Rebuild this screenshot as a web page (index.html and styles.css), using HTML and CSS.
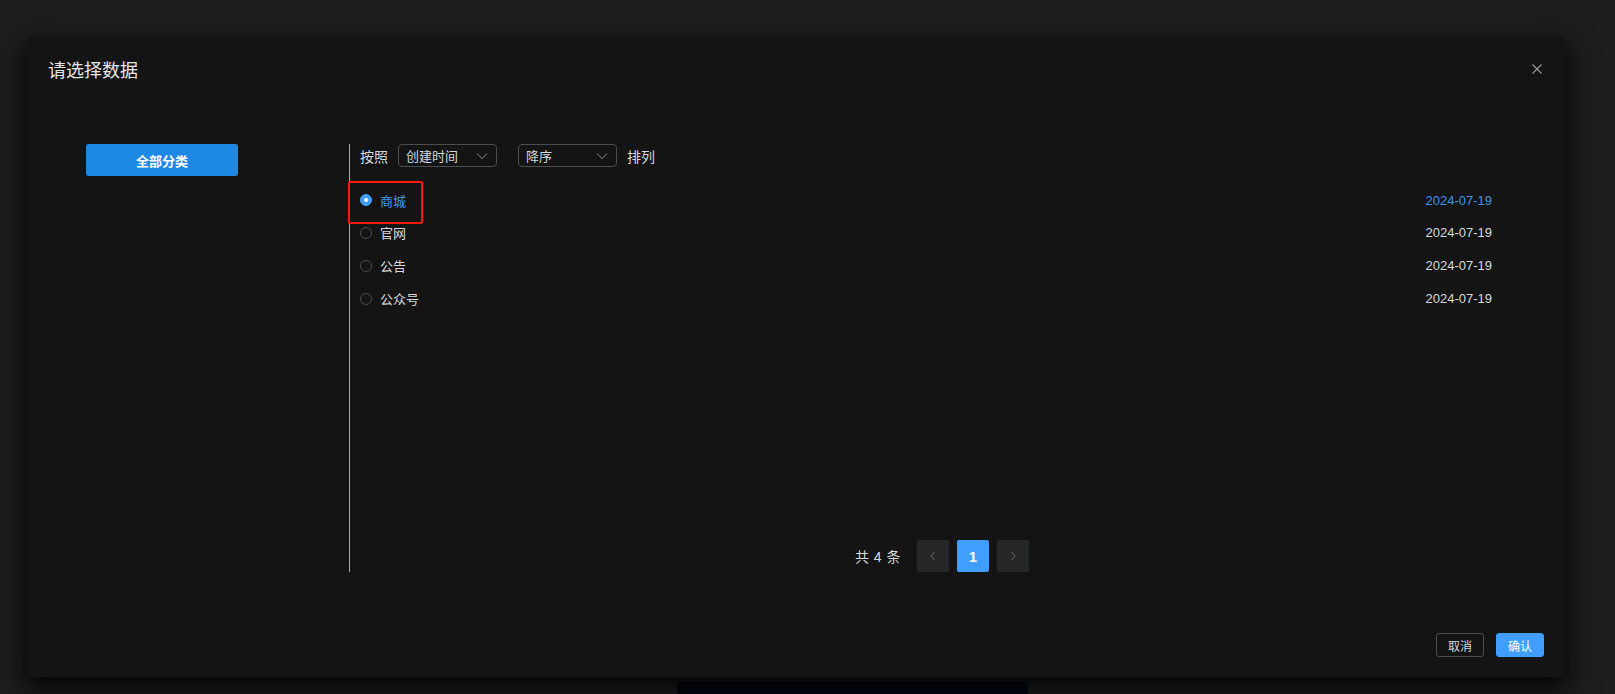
FILE: index.html
```html
<!DOCTYPE html>
<html lang="zh-CN">
<head>
<meta charset="utf-8">
<title>请选择数据</title>
<link rel="stylesheet" href="styles.css">
</head>
<body>
<div class="dialog">
  <div class="dialog-header">
    <span class="dialog-title">请选择数据</span>
    <button class="close-btn" aria-label="关闭">
      <svg width="10" height="10" viewBox="0 0 10 10"><path d="M0.5 0.5L9.5 9.5M9.5 0.5L0.5 9.5" stroke="#9a9a9a" stroke-width="1.1" fill="none"/></svg>
    </button>
  </div>
  <div class="dialog-body">
    <div class="side">
      <button class="cat-btn">全部分类</button>
    </div>
    <div class="panel">
      <div class="toolbar">
        <span class="tb-label">按照</span>
        <div class="select">
          <span>创建时间</span>
          <svg width="12" height="8" viewBox="0 0 12 8"><path d="M1 1.5L6 6.5L11 1.5" stroke="#8d9095" stroke-width="1" fill="none"/></svg>
        </div>
        <div class="select select-2">
          <span>降序</span>
          <svg width="12" height="8" viewBox="0 0 12 8"><path d="M1 1.5L6 6.5L11 1.5" stroke="#8d9095" stroke-width="1" fill="none"/></svg>
        </div>
        <span class="tb-label">排列</span>
      </div>
      <div class="list">
        <div class="row active">
          <label class="radio marked"><span class="dot"></span><span class="name">商城</span></label>
          <span class="date">2024-07-19</span>
        </div>
        <div class="row">
          <label class="radio"><span class="dot"></span><span class="name">官网</span></label>
          <span class="date">2024-07-19</span>
        </div>
        <div class="row">
          <label class="radio"><span class="dot"></span><span class="name">公告</span></label>
          <span class="date">2024-07-19</span>
        </div>
        <div class="row">
          <label class="radio"><span class="dot"></span><span class="name">公众号</span></label>
          <span class="date">2024-07-19</span>
        </div>
      </div>
      <div class="pager">
        <span class="total">共 4 条</span>
        <button class="pg-btn">
          <svg width="8" height="10" viewBox="0 0 8 10"><path d="M5.5 1L2 5L5.5 9" stroke="#6b6d71" stroke-width="1" fill="none"/></svg>
        </button>
        <button class="pg-btn current">1</button>
        <button class="pg-btn">
          <svg width="8" height="10" viewBox="0 0 8 10"><path d="M2.5 1L6 5L2.5 9" stroke="#6b6d71" stroke-width="1" fill="none"/></svg>
        </button>
      </div>
    </div>
  </div>
  <div class="dialog-footer">
    <button class="btn btn-cancel">取消</button>
    <button class="btn btn-ok">确认</button>
  </div>
</div>
<div class="under"></div>
</body>
</html>
```

FILE: styles.css
```css
* { box-sizing: border-box; }
html, body { margin: 0; padding: 0; }
body {
  background: #1e1e1e;
  width: 1615px;
  height: 694px;
  overflow: hidden;
  font-family: "Liberation Sans", "Noto Sans CJK SC", sans-serif;
  color: #d6d9de;
  padding-top: 37px;
  padding-left: 28px;
}
button { font-family: inherit; cursor: pointer; }

.dialog {
  position: relative;
  z-index: 2;
  width: 1536px;
  height: 640px;
  background: #141414;
  display: flex;
  flex-direction: column;
  box-shadow: 0 12px 32px 4px rgba(0,0,0,0.4), 0 8px 20px rgba(0,0,0,0.75);
}

.dialog-header {
  display: flex;
  justify-content: space-between;
  align-items: center;
  padding: 22px 22px 0 20px;
  height: 46px;
}
.dialog-title {
  font-size: 18px;
  line-height: 24px;
  color: #e5e5e5;
}
.close-btn {
  background: none;
  border: none;
  padding: 0;
  width: 10px;
  height: 10px;
  display: flex;
  margin-top: -4px;
}

.dialog-body {
  display: flex;
  margin-top: 61px;
  height: 428px;
}
.side {
  width: 321px;
  padding-left: 58px;
}
.cat-btn {
  width: 152px;
  height: 32px;
  border: none;
  border-radius: 3px;
  background: #1e88e5;
  color: #ffffff;
  font-size: 13px;
  font-weight: bold;
}

.panel {
  flex: 1;
  border-left: 1px solid #a8abb2;
  padding-left: 10px;
  display: flex;
  flex-direction: column;
}
.toolbar {
  display: flex;
  align-items: center;
  height: 23px;
}
.tb-label {
  font-size: 14px;
  color: #d6d9de;
}
.select {
  width: 99px;
  height: 23px;
  border: 1px solid #4c4d4f;
  border-radius: 4px;
  display: flex;
  align-items: center;
  justify-content: space-between;
  padding: 0 8px 0 7px;
  font-size: 13px;
  color: #d6d9de;
  margin-left: 10px;
}
.select-2 { margin-left: 21px; margin-right: 10px; }

.list {
  margin-top: 17px;
  padding-right: 72px;
}
.row {
  height: 33px;
  display: flex;
  align-items: center;
  justify-content: space-between;
}
.row:first-child { height: 32px; }
.radio {
  position: relative;
  display: flex;
  align-items: center;
  gap: 8px;
  font-size: 13px;
  color: #d6d9de;
}
.dot {
  width: 12px;
  height: 12px;
  border-radius: 50%;
  border: 1px solid #4c4d4f;
  background: transparent;
  display: block;
}
.row.active .dot {
  background: #409eff;
  border-color: #409eff;
  position: relative;
}
.row.active .dot::after {
  content: "";
  position: absolute;
  left: 3px;
  top: 3px;
  width: 4px;
  height: 4px;
  border-radius: 50%;
  background: #ffffff;
}
.row.active .name,
.row.active .date { color: #3d95e8; }
.radio.marked::before {
  content: "";
  position: absolute;
  left: -12px;
  top: -10px;
  width: 71px;
  height: 39px;
  border: 2px solid #fa1a0c;
  border-radius: 2px;
}
.date {
  font-size: 13px;
  color: #d6d9de;
}

.pager {
  margin-top: auto;
  display: flex;
  align-items: center;
  justify-content: center;
  gap: 8px;
  padding-right: 40px;
}
.total {
  font-size: 14px;
  color: #d6d9de;
  margin-right: 8px;
  letter-spacing: 0.5px;
}
.pg-btn {
  width: 32px;
  height: 32px;
  border: none;
  border-radius: 2px;
  background: #262727;
  display: flex;
  align-items: center;
  justify-content: center;
  padding: 0;
}
.pg-btn.current {
  background: #409eff;
  color: #ffffff;
  font-size: 15px;
  font-weight: bold;
}

.dialog-footer {
  margin-top: 61px;
  display: flex;
  justify-content: flex-end;
  gap: 12px;
  padding-right: 20px;
}
.btn {
  width: 48px;
  height: 24px;
  border-radius: 3px;
  font-size: 12px;
  padding: 0;
}
.btn-cancel {
  background: transparent;
  border: 1px solid #4c4d4f;
  color: #d6d9de;
}
.btn-ok {
  background: #409eff;
  border: 1px solid #409eff;
  color: #ffffff;
}

.under {
  position: relative;
  z-index: 1;
  margin-top: 5px;
  margin-left: 649px;
  width: 351px;
  height: 20px;
  background: #030810;
  border-radius: 4px 4px 0 0;
}
```
